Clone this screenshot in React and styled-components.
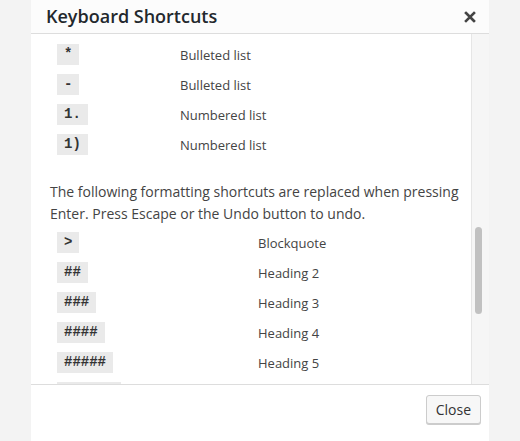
import React from 'react';
import styled, { createGlobalStyle } from 'styled-components';

const GlobalStyle = createGlobalStyle`
  html, body {
    margin: 0;
    padding: 0;
    background: #f3f3f3;
    font-family: "Open Sans", "Noto Sans", sans-serif;
    color: #444;
  }
`

const Page = styled.div`
  height: 441px;
  padding: 0 31px;
  overflow: hidden;
`

const Dialog = styled.div`
  width: 458px;
  height: 441px;
  background: #fff;
  display: flex;
  flex-direction: column;
`

const Header = styled.div`
  height: 33px;
  flex: none;
  background: #fcfcfc;
  border-bottom: 1px solid #dddddd;
  display: flex;
  align-items: center;
  justify-content: space-between;
  padding: 0 13px 0 15px;
`

const Title = styled.h1`
  margin: 0;
  font-size: 18px;
  font-weight: 600;
  color: #23282d;
  line-height: 33px;
`

const CloseIcon = styled.button`
  border: none;
  background: none;
  padding: 0;
  width: 12px;
  height: 12px;
  display: flex;
  margin-top: 1px;
`

const Body = styled.div`
  flex: 1;
  min-height: 0;
  display: flex;
`

const Scroller = styled.div`
  flex: 1;
  overflow: hidden;
  padding: 5.5px 0 0 19px;
`

const Track = styled.div`
  width: 12px;
  flex: none;
  background: #f6f6f6;
  border-left: 1px solid #e6e6e6;
  padding: 0 2px 0 3px;
`

const Thumb = styled.div`
  width: 7px;
  height: 87px;
  border-radius: 4px;
  background: #c1c1c1;
  margin-top: ${p => p.$offset}px;
`

const Row = styled.div`
  display: flex;
  align-items: center;
  height: 30px;
`

const KeyCell = styled.div`
  flex: none;
  width: ${p => p.$width}px;
  padding-left: 7px;
  box-sizing: border-box;
  display: flex;
  align-items: center;
`

const Kbd = styled.kbd`
  display: inline-block;
  height: 21px;
  line-height: 21px;
  padding: 0 7px;
  background: #eaeaea;
  color: #333;
  font-family: "Liberation Mono", "DejaVu Sans Mono", monospace;
  font-size: 14px;
  font-weight: bold;
`

const Desc = styled.span`
  font-size: 13px;
  line-height: 18px;
  color: #444;
  white-space: nowrap;
`

const Note = styled.p`
  margin: 21px 0 3px;
  font-size: 14px;
  line-height: 22px;
  color: #444;
`

const Footer = styled.div`
  height: 46px;
  flex: none;
  border-top: 1px solid #dddddd;
  display: flex;
  justify-content: flex-end;
  align-items: flex-start;
  padding: 10px 8px 0 0;
`

const Button = styled.button`
  height: 29px;
  padding: 0 9px;
  border: 1px solid #cccccc;
  border-radius: 3px;
  background: #f7f7f7;
  box-shadow: 0 1px 0 #cccccc;
  font-family: "Open Sans", "Noto Sans", sans-serif;
  font-size: 14px;
  color: #333;
`

const lists = [
  ['*', 'Bulleted list'],
  ['-', 'Bulleted list'],
  ['1.', 'Numbered list'],
  ['1)', 'Numbered list'],
]

const blocks = [
  ['>', 'Blockquote'],
  ['##', 'Heading 2'],
  ['###', 'Heading 3'],
  ['####', 'Heading 4'],
  ['#####', 'Heading 5'],
  ['######', 'Heading 6'],
]

function Shortcuts({ rows, keyWidth }) {
  return (
    <div>
      {rows.map(([key, label], i) => (
        <Row key={i}>
          <KeyCell $width={keyWidth}><Kbd>{key}</Kbd></KeyCell>
          <Desc>{label}</Desc>
        </Row>
      ))}
    </div>
  )
}

export default function App() {
  return (
    <Page>
      <GlobalStyle />
      <Dialog>
        <Header>
          <Title>Keyboard Shortcuts</Title>
          <CloseIcon aria-label="Close">
            <svg width="12" height="12" viewBox="0 0 12 12">
              <path d="M2 2 L10 10 M10 2 L2 10" stroke="#444" strokeWidth="2.6" strokeLinecap="square" />
            </svg>
          </CloseIcon>
        </Header>
        <Body>
          <Scroller>
            <Shortcuts rows={lists} keyWidth={130} />
            <Note>
              The following formatting shortcuts are replaced when pressing Enter. Press Escape or the Undo button to undo.
            </Note>
            <Shortcuts rows={blocks} keyWidth={208} />
          </Scroller>
          <Track>
            <Thumb $offset={193} />
          </Track>
        </Body>
        <Footer>
          <Button>Close</Button>
        </Footer>
      </Dialog>
    </Page>
  );
}
